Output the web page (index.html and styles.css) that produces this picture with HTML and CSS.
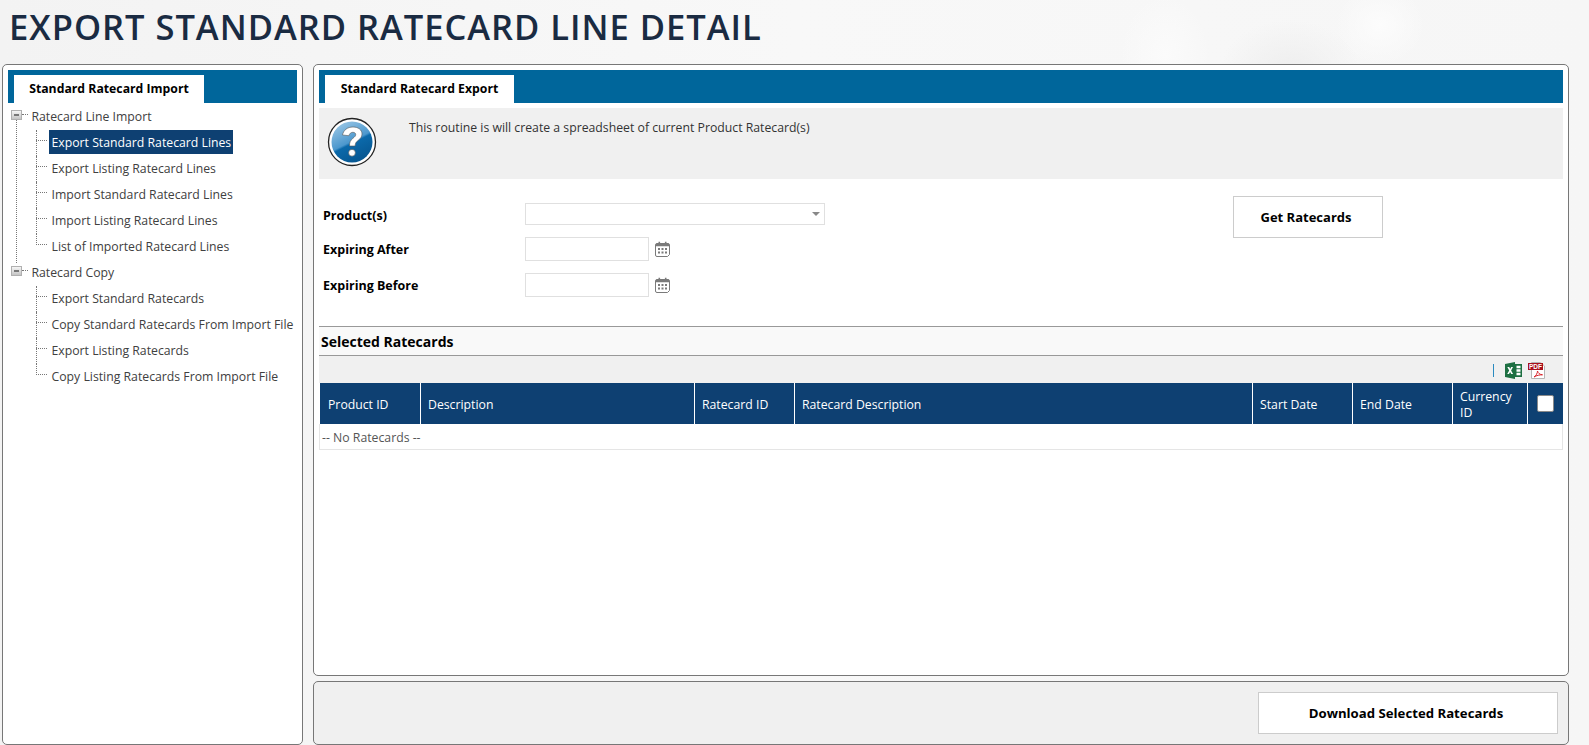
FILE: index.html
```html
<!DOCTYPE html>
<html>
<head>
  <title>Export Standard Ratecard Line Detail</title>
  <link rel="stylesheet" href="styles.css">
</head>
<body>
  <h1 class="page-title">EXPORT STANDARD RATECARD LINE DETAIL</h1>

  <div class="layout">
    <div class="panel side">
      <div class="tabbar"><div class="tab tab-side">Standard Ratecard Import</div></div>
      <ul class="tree">
        <li class="group group-first">
          <span class="toggle"></span><span class="group-name">Ratecard Line Import</span>
          <ul class="children">
            <li><a class="current">Export Standard Ratecard Lines</a></li>
            <li><a>Export Listing Ratecard Lines</a></li>
            <li><a>Import Standard Ratecard Lines</a></li>
            <li><a>Import Listing Ratecard Lines</a></li>
            <li><a>List of Imported Ratecard Lines</a></li>
          </ul>
        </li>
        <li class="group">
          <span class="toggle"></span><span class="group-name">Ratecard Copy</span>
          <ul class="children">
            <li><a>Export Standard Ratecards</a></li>
            <li><a>Copy Standard Ratecards From Import File</a></li>
            <li><a>Export Listing Ratecards</a></li>
            <li><a>Copy Listing Ratecards From Import File</a></li>
          </ul>
        </li>
      </ul>
    </div>

    <div class="content">
      <div class="panel main">
        <div class="tabbar"><div class="tab tab-main">Standard Ratecard Export</div></div>

        <div class="info">
          <svg class="info-icon" width="50" height="50" viewBox="0 0 50 50">
            <defs>
              <linearGradient id="ball" x1="0.2" y1="0" x2="0.7" y2="1">
                <stop offset="0" stop-color="#9cc8e6"/>
                <stop offset="0.5" stop-color="#4b97cd"/>
                <stop offset="0.55" stop-color="#0b69aa"/>
                <stop offset="1" stop-color="#06558f"/>
              </linearGradient>
            </defs>
            <circle cx="25" cy="25" r="23.5" fill="#fff" stroke="#222" stroke-width="1.3"/>
            <circle cx="25" cy="25" r="20.5" fill="url(#ball)"/>
            <path d="M15.500 18c1-5 5-8 10.500-8 5.500 0 9 3 9 7 0 3-1.800 4.800-4.300 6.800-1.800 1.400-2.400 2.500-2.600 5.200h-5.600c0-3.800.9-5.600 3.200-7.500 2-1.600 3-2.500 3-3.900 0-1.400-1.100-2.300-2.800-2.300-2 0-3.400 1.200-4 3.400z" fill="#fff" stroke="#555" stroke-width=".6"/>
            <circle cx="25" cy="35.800" r="3.400" fill="#fff" stroke="#555" stroke-width=".6"/>
          </svg>
          <p class="info-text">This routine is will create a spreadsheet of current Product Ratecard(s)</p>
        </div>

        <div class="filters">
          <div class="fields">
            <div class="field field-select">
              <label>Product(s)</label>
              <div class="select"><span class="arrow"></span></div>
            </div>
            <div class="field">
              <label>Expiring After</label>
              <div class="date"></div>
              <svg class="cal" width="15" height="16" viewBox="0 0 15 16">
                <path d="M2 2.500h11a1.500 1.500 0 0 1 1.500 1.500v9.500l-2 2h-10.500a1.500 1.500 0 0 1-1.500-1.500v-10a1.500 1.500 0 0 1 1.500-1.500z" fill="#fff" stroke="#7a7a7a"/>
                <path d="M1 2.800h13v2.400h-13zM3.500.8h1.600v2.500h-1.600zM9.900.8h1.600v2.500h-1.600z" fill="#7a7a7a"/>
                <path d="M3 7h2v2h-2zM6.500 7h2v2h-2zM10 7h2v2h-2zM3 10.500h2v2h-2zM6.500 10.500h2v2h-2zM10 10.500h2v2h-2z" fill="#7a7a7a"/>
              </svg>
            </div>
            <div class="field">
              <label>Expiring Before</label>
              <div class="date"></div>
              <svg class="cal" width="15" height="16" viewBox="0 0 15 16">
                <path d="M2 2.500h11a1.500 1.500 0 0 1 1.500 1.500v9.500l-2 2h-10.500a1.500 1.500 0 0 1-1.500-1.500v-10a1.500 1.500 0 0 1 1.500-1.500z" fill="#fff" stroke="#7a7a7a"/>
                <path d="M1 2.800h13v2.400h-13zM3.500.8h1.600v2.500h-1.600zM9.900.8h1.600v2.500h-1.600z" fill="#7a7a7a"/>
                <path d="M3 7h2v2h-2zM6.500 7h2v2h-2zM10 7h2v2h-2zM3 10.500h2v2h-2zM6.500 10.500h2v2h-2zM10 10.500h2v2h-2z" fill="#7a7a7a"/>
              </svg>
            </div>
          </div>
          <button class="btn btn-get">Get Ratecards</button>
        </div>

        <div class="section-title">Selected Ratecards</div>
        <div class="toolbar">
          <span class="tool-sep"></span>
          <svg class="tool" width="17" height="17" viewBox="0 0 17 17">
            <path d="M0 2l10-2v17l-10-2z" fill="#1d6f42"/>
            <path d="M10 2h7v13h-7z" fill="#1d6f42"/>
            <path d="M11.500 3.800h4v2.400h-4zM11.500 7.300h4v2.400h-4zM11.500 10.800h4v2.400h-4z" fill="#fff"/>
            <path d="M2.300 5h1.900l1 2 1-2h1.800l-1.900 3.500 2 3.500h-1.900l-1.100-2.100-1.100 2.100h-1.800l2-3.500z" fill="#fff"/>
          </svg>
          <svg class="tool tool-pdf" width="17" height="17" viewBox="0 0 17 17">
            <path d="M3.500.5h9l4 3.500v12.500h-13z" fill="#fff" stroke="#b5b5b5"/>
            <rect x="0" y="1" width="15" height="7" fill="#a8101c"/>
            <text x="7.500" y="7" class="pdf-text">PDF</text>
            <path d="M6 15c2-1 3.500-4 3.500-6 .5 2 2 3.500 5 3.800-2.500 0-6 .5-8.500 2.200z" fill="none" stroke="#d8232a"/>
          </svg>
        </div>

        <table class="grid">
          <colgroup>
            <col class="c-first"><col class="c-desc"><col class="c-id"><col class="c-rdesc"><col class="c-id"><col class="c-id"><col class="c-cur"><col class="c-chk">
          </colgroup>
          <thead>
            <tr>
              <th>Product ID</th>
              <th>Description</th>
              <th>Ratecard ID</th>
              <th>Ratecard Description</th>
              <th>Start Date</th>
              <th>End Date</th>
              <th>Currency ID</th>
              <th class="chk"><span class="checkbox"></span></th>
            </tr>
          </thead>
          <tbody>
            <tr><td colspan="8">-- No Ratecards --</td></tr>
          </tbody>
        </table>
      </div>

      <div class="panel footer">
        <button class="btn btn-download">Download Selected Ratecards</button>
      </div>
    </div>
  </div>
</body>
</html>
```
FILE: styles.css
```css
* { box-sizing: border-box; }
html, body { height: 100%; }
body {
  margin: 0;
  overflow: hidden;
  font-family: "Open Sans", "Noto Sans", sans-serif;
  font-size: 12.25px;
  color: #404040;
  background-color: #f7f7f7;
  background-image:
    radial-gradient(ellipse 70px 50px at 1290px 70px, #eeeeee, transparent),
    radial-gradient(ellipse 45px 60px at 1165px 55px, #fbfbfb, transparent),
    radial-gradient(ellipse 45px 40px at 1380px 25px, #fcfcfc, transparent),
    linear-gradient(90deg, #f3f3f3, #f8f8f8 50%, #f6f6f6);
}

.page-title {
  margin: 0;
  height: 64px;
  padding: 5px 0 0 9px;
  font-size: 34.5px;
  line-height: 43px;
  font-weight: 600;
  letter-spacing: 0.98px;
  color: #1a2b42;
}

.layout {
  display: grid;
  grid-template-columns: 301px 1256px;
  gap: 10px;
  height: 681px;
  padding-left: 2px;
}

.panel {
  border: 1px solid #777;
  border-radius: 5px;
  background: #fff;
  padding: 5px;
}

.side { height: 681px; }

.tabbar {
  height: 33px;
  padding: 5px 0 0 6px;
  background: #00669b;
}
.tab {
  height: 28px;
  background: #fff;
  color: #000;
  font-weight: 700;
  line-height: 28px;
  text-align: center;
}
.tab-side { width: 190px; }
.tab-main { width: 189px; }

/* tree */
.tree, .children { list-style: none; margin: 0; padding: 0; }
.tree { padding-top: 1px; }
.group { position: relative; }
.group-first::before {
  content: "";
  position: absolute;
  left: 8px;
  top: 16px;
  height: 143px;
  border-left: 1px dotted #777;
}
.toggle {
  position: absolute;
  left: 3px;
  top: 6px;
  width: 11px;
  height: 10px;
  border: 1px solid #b0b0b0;
  background: linear-gradient(#f6f6f6, #c4c4c4);
}
.toggle::before {
  content: "";
  position: absolute;
  left: 2px;
  top: 3px;
  width: 5px;
  height: 2px;
  background: #777;
}
.toggle::after {
  content: "";
  position: absolute;
  left: 10px;
  top: 3px;
  width: 6px;
  border-top: 1px dotted #777;
}
.group-name {
  display: block;
  height: 26px;
  line-height: 26px;
  padding-left: 23.5px;
}
.children li {
  position: relative;
  height: 26px;
  padding-left: 44px;
}
.children li::before {
  content: "";
  position: absolute;
  left: 28px;
  top: 0;
  height: 26px;
  border-left: 1px dotted #777;
}
.children li:last-child::before { height: 11px; }
.children li::after {
  content: "";
  position: absolute;
  left: 28px;
  top: 10px;
  width: 11px;
  border-top: 1px dotted #777;
}
.children a {
  display: inline-block;
  height: 24px;
  line-height: 25px;
  margin-left: -3px;
  padding: 0 2px 0 2.5px;
  white-space: nowrap;
}
.children a.current {
  background: #0e4072;
  color: #fff;
}

/* right side */
.content {
  display: flex;
  flex-direction: column;
  gap: 5px;
}
.main { height: 612px; }

.info {
  display: flex;
  height: 71px;
  margin-top: 5px;
  padding: 9px 0 0 8px;
  background: #f0f0f0;
}
.info-icon { flex: none; }
.info-text {
  margin: 2px 0 0 32px;
  color: #333;
}

.filters {
  display: flex;
  justify-content: space-between;
  align-items: flex-start;
  height: 147px;
  padding: 17px 180px 0 4px;
}
.fields {
  display: flex;
  flex-direction: column;
  gap: 12px;
  padding-top: 7px;
}
.field {
  display: flex;
  align-items: center;
  height: 24px;
}
.field-select { height: 22px; }
.field-select label { padding-top: 2px; }
.field label {
  width: 202px;
  font-size: 12.5px;
  font-weight: 700;
  color: #000;
}
.select {
  position: relative;
  width: 300px;
  height: 22px;
  border: 1px solid #e0e0e0;
  background: #fff;
}
.arrow {
  position: absolute;
  right: 4px;
  top: 8px;
  border: 4px solid transparent;
  border-top-color: #888;
  border-bottom: 0;
}
.date {
  width: 124px;
  height: 24px;
  border: 1px solid #e0e0e0;
}
.cal { margin-left: 6px; }

.btn {
  background: #fff;
  border: 1px solid #ccc;
  color: #000;
  font-family: inherit;
  font-size: 13px;
  font-weight: 700;
  padding: 0 4px 0 0;
}
.btn-get { width: 150px; height: 42px; }
.btn-download { width: 300px; height: 42px; font-size: 13.2px; }

.section-title {
  height: 30px;
  border-top: 1px solid #999;
  border-bottom: 1px solid #999;
  background: #f9f9f9;
  padding-left: 2px;
  font-size: 14px;
  font-weight: 700;
  line-height: 29px;
  color: #000;
}
.toolbar {
  display: flex;
  justify-content: flex-end;
  align-items: center;
  height: 27px;
  padding: 1px 18px 0 0;
  background: #f0f0f0;
}
.tool-sep {
  width: 1.500px;
  height: 13px;
  margin-right: 11px;
  background: #2a8ac0;
}
.tool-pdf { margin-left: 6px; }
.pdf-text {
  fill: #fff;
  font-family: "Liberation Sans", sans-serif;
  font-size: 6.500px;
  font-weight: 700;
  text-anchor: middle;
}

.grid {
  width: 1243px;
  border-collapse: collapse;
  table-layout: fixed;
}
.c-first { width: 101px; }
.c-id { width: 100px; }
.c-desc { width: 274px; }
.c-rdesc { width: 458px; }
.c-cur { width: 75px; }
.c-chk { width: 35px; }
.grid th {
  height: 41px;
  padding: 2px 6px 0 7px;
  background: #0e4072;
  border-left: 1px solid #fff;
  color: #fff;
  font-weight: 400;
  line-height: 16px;
  text-align: left;
}
.grid th:first-child { padding-left: 8px; }
.grid th.chk { padding: 0 0 0 9px; }
.checkbox {
  display: block;
  width: 17px;
  height: 17px;
  background: #fff;
  border: 1px solid #8a8a8a;
  border-radius: 2px;
}
.grid td {
  height: 25px;
  padding: 2px 2px 0;
  border: 1px solid #e5e5e5;
  border-top: 0;
  color: #555;
}

.footer {
  height: 64px;
  padding: 10px 10px 0 0;
  background: #f0f0f0;
  text-align: right;
}
```
